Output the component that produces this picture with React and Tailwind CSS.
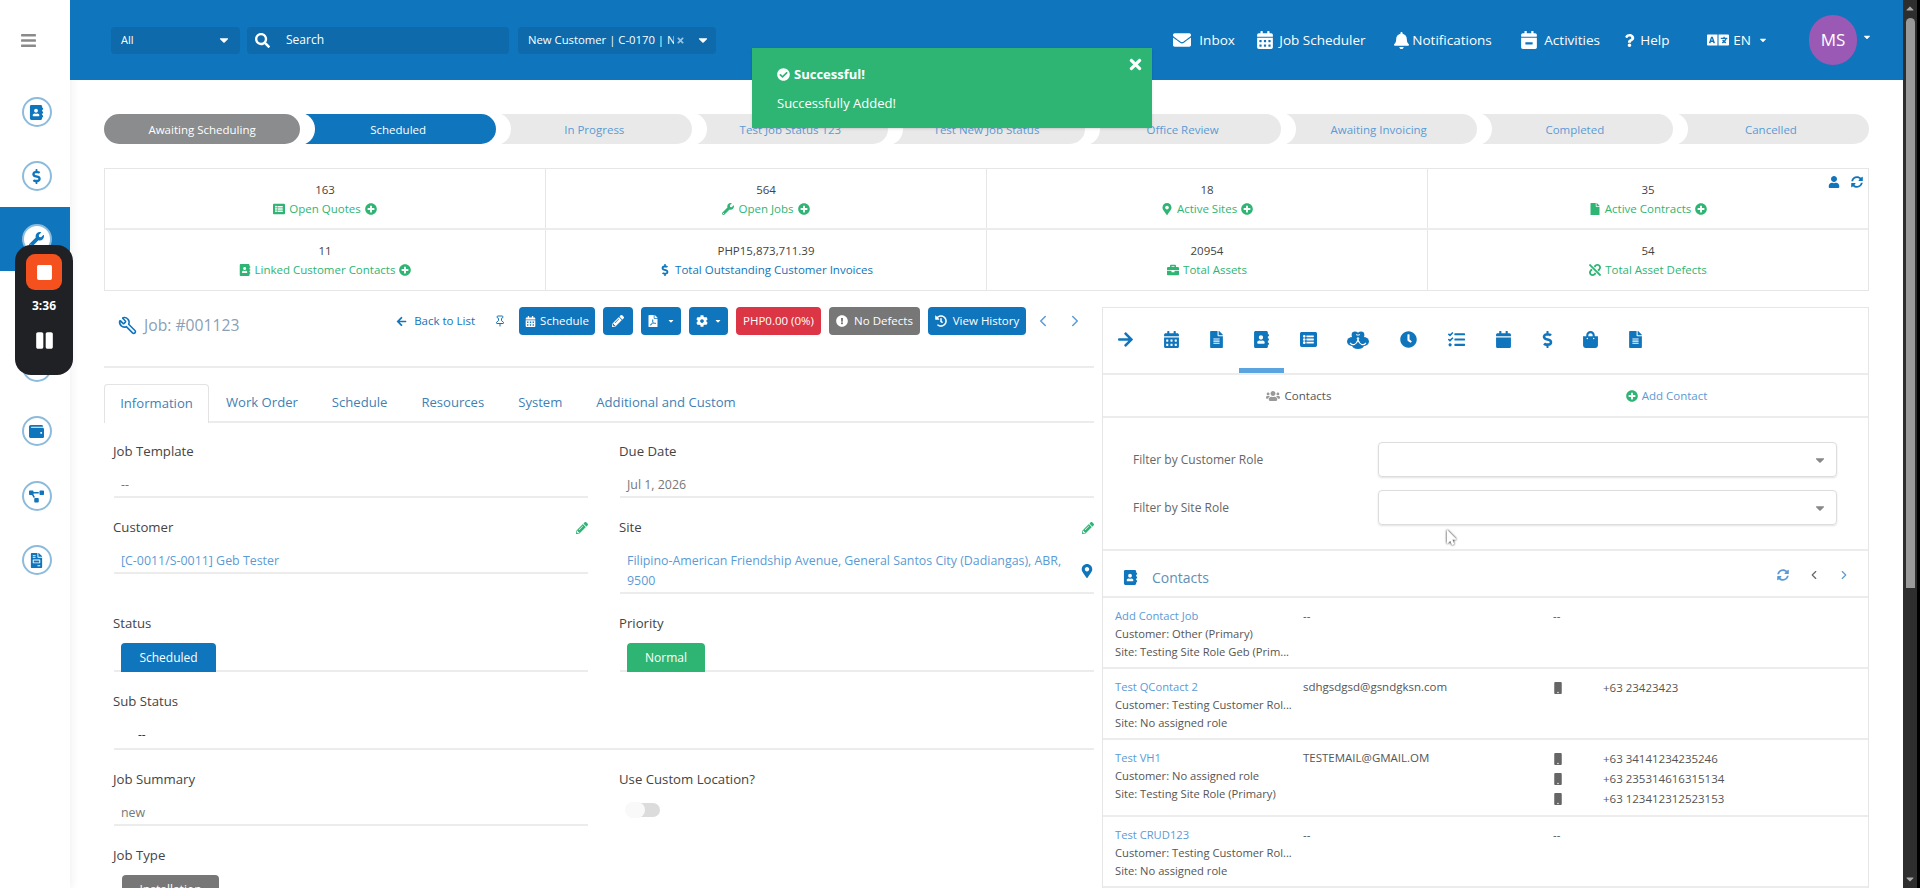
import {
  FaBars, FaAddressBook, FaDollarSign, FaWrench, FaWallet, FaProjectDiagram, FaFileInvoice,
  FaSearch, FaCaretDown, FaTimes, FaEnvelope, FaCalendarAlt, FaBell, FaCalendarMinus, FaQuestion,
  FaLanguage, FaCheckCircle, FaListAlt, FaPlusCircle, FaMapMarkerAlt, FaFileAlt, FaFile, FaBriefcase, FaUnlink,
  FaUser, FaSyncAlt, FaArrowLeft, FaArrowRight, FaPencilAlt, FaFilePdf, FaCog,
  FaExclamationCircle, FaHistory, FaClock, FaTasks,
  FaCalendar, FaShoppingBag, FaUsers, FaMobile, FaStop, FaPause, FaMousePointer,
} from 'react-icons/fa';
import { FiChevronLeft, FiChevronRight } from 'react-icons/fi';
import { Wrench, Pin } from 'lucide-react';

const font = { fontFamily: '"Open Sans", sans-serif' };

const Circle = ({ icon: Icon, className = 'bg-white' }) => (
  <div className={`ml-[3px] flex h-[30px] w-[30px] items-center justify-center rounded-full border-2 border-[#8dbbdc] ${className}`}>
    <Icon className="text-[15px] text-[#0f75bc]" />
  </div>
);

const Sidebar = () => (
  <aside className="flex w-[70px] shrink-0 flex-col items-center bg-white shadow-[2px_0_8px_rgba(0,0,0,0.06)]">
    <div className="flex h-20 w-full items-center pl-[20px]">
      <FaBars className="text-[17px] text-[#8a8a8a]" />
    </div>
    <div className="mt-[17px]"><Circle icon={FaAddressBook} /></div>
    <div className="mt-[34px]"><Circle icon={FaDollarSign} /></div>
    <div className="mt-[16px] flex h-[64px] w-full items-center justify-center bg-[#0f75bc]"><Circle icon={FaWrench} /></div>
    <div className="mt-[17px]"><Circle icon={FaFileAlt} /></div>
    <div className="mt-[34px]"><Circle icon={FaFileAlt} /></div>
    <div className="mt-[34px]"><Circle icon={FaWallet} /></div>
    <div className="mt-[35px]"><Circle icon={FaProjectDiagram} /></div>
    <div className="mt-[34px]"><Circle icon={FaFileInvoice} /></div>
  </aside>
);

const navItems = [
  { label: 'Inbox', icon: FaEnvelope, size: 'text-[18px]', box: 'w-[26px]', w: 'w-[83px]' },
  { label: 'Job Scheduler', icon: FaCalendarAlt, size: 'text-[18px]', box: 'w-[23px]', w: 'w-[137px]' },
  { label: 'Notifications', icon: FaBell, size: 'text-[17px]', box: 'w-[19px]', w: 'w-[127px]' },
  { label: 'Activities', icon: FaCalendarMinus, size: 'text-[18px]', box: 'w-[24px]', w: 'w-[103px]' },
  { label: 'Help', icon: FaQuestion, size: 'text-[13px]', box: 'w-[17px]', w: 'w-[84px]' },
];

const Header = () => (
  <header className="flex h-20 shrink-0 items-center bg-[#0f75bc] pl-[41px] text-white">
    <div className="flex h-[27px] w-[129px] items-center justify-between rounded-sm bg-[#0e6aab] pl-[10px] pr-[9px] text-[11px]">
      All <FaCaretDown className="text-[14px]" />
    </div>
    <div className="ml-[7px] flex h-[27px] w-[262px] items-center rounded-sm bg-[#0e6aab] pl-2 text-[12px]">
      <FaSearch className="mr-[16px] text-[15px]" /> Search
    </div>
    <div className="ml-[9px] flex h-[27px] w-[198px] items-center rounded-sm bg-[#0e6aab] pl-[10px] text-[11.3px]">
      <span className="w-[146px] overflow-hidden whitespace-nowrap">New Customer | C-0170 | Name</span>
      <FaTimes className="ml-[2px] text-[9px] text-[#9cc4e0]" />
      <FaCaretDown className="ml-[11px] text-[14px]" />
    </div>
    <nav className="ml-auto flex items-center text-[13.5px]">
      {navItems.map(({ label, icon: Icon, size, box, w }) => (
        <div key={label} className={`flex items-center ${w}`}>
          <div className={box}><Icon className={size} /></div>
          <span className="pt-[1px]">{label}</span>
        </div>
      ))}
      <FaLanguage className="text-[22px]" />
      <span className="ml-[4px]">EN</span>
      <FaCaretDown className="ml-[7px] text-[10px]" />
      <div className="ml-[41px] flex h-[50px] w-[48px] items-center justify-center rounded-full bg-[#9b59b6] text-[17px]">MS</div>
      <FaCaretDown className="mb-[6px] ml-[5px] mr-[31px] text-[10px]" />
    </nav>
  </header>
);

const steps = ['Awaiting Scheduling', 'Scheduled', 'In Progress', 'Test Job Status 123', 'Test New Job Status', 'Office Review', 'Awaiting Invoicing', 'Completed', 'Cancelled'];

const Stepper = () => (
  <div className="mt-[34px] flex h-[30px]">
    {steps.map((step, i) => {
      let tone = 'bg-[#e9e9e9] text-[#5b9bd5]';
      if (i === 0) tone = 'bg-[#8a8c8e] text-white rounded-l-full';
      if (i === 1) tone = 'bg-[#0f75bc] text-white';
      return (
        <div key={step} className={`relative flex flex-1 items-center justify-center overflow-hidden rounded-r-full text-[11.5px] ${tone}`}>
          {i > 0 && <span className="absolute -left-[15px] -top-[1px] h-[32px] w-[30px] rounded-[50%] bg-white" />}
          <span className="relative pt-[2px]">{step}</span>
        </div>
      );
    })}
  </div>
);

const Stat = ({ value, icon: Icon, label, plus, blue, extra }) => (
  <div className="relative flex flex-1 flex-col items-center justify-center border-r border-[#e6e6e6] pt-[1px] text-[11.5px] last:border-r-0">
    <div className="leading-[18px] text-[#444]">{value}</div>
    <div className={`mt-[1px] flex items-center leading-[18px] ${blue ? 'text-[#0f75bc]' : 'text-[#2eb574]'}`}>
      <Icon className="mr-[4px] text-[12px]" />
      {label}
      {plus && <FaPlusCircle className="ml-[4px] text-[12px]" />}
    </div>
    {extra}
  </div>
);

const StatsGrid = () => (
  <div className="mt-[24px] h-[123px] border border-[#e6e6e6]">
    <div className="flex h-[61px] border-b-2 border-[#ececec]">
      <Stat value="163" icon={FaListAlt} label="Open Quotes" plus />
      <Stat value="564" icon={FaWrench} label="Open Jobs" plus />
      <Stat value="18" icon={FaMapMarkerAlt} label="Active Sites" plus />
      <Stat
        value="35"
        icon={FaFile}
        label="Active Contracts"
        plus
        extra={
          <div className="absolute right-[5px] top-[7px] flex gap-[11px] text-[12px] text-[#0f75bc]">
            <FaUser />
            <FaSyncAlt />
          </div>
        }
      />
    </div>
    <div className="flex h-[60px]">
      <Stat value="11" icon={FaAddressBook} label="Linked Customer Contacts" plus />
      <Stat value="PHP15,873,711.39" icon={FaDollarSign} label="Total Outstanding Customer Invoices" blue />
      <Stat value="20954" icon={FaBriefcase} label="Total Assets" />
      <Stat value="54" icon={FaUnlink} label="Total Asset Defects" />
    </div>
  </div>
);

const Btn = ({ className = 'bg-[#0f75bc]', children, w }) => (
  <div className={`flex h-[28px] items-center justify-center rounded-[4px] text-[11.5px] text-white ${w} ${className}`}>{children}</div>
);

const JobToolbar = () => (
  <div className="flex h-[61px] items-start border-b-2 border-[#ececec]">
    <div className="ml-[14px] mt-[7px] flex items-center text-[#8aa0b5]">
      <Wrench size={19} strokeWidth={2} className="mr-[7px] -scale-x-100 text-[#0f75bc]" />
      <span className="text-[15.7px]">Job: #001123</span>
    </div>
    <div className="ml-auto flex items-center">
      <FaArrowLeft className="text-[11px] text-[#0f75bc]" />
      <span className="ml-[7px] text-[11.5px] text-[#0f75bc]">Back to List</span>
      <Pin size={12} className="ml-[19px] text-[#0f75bc]" />
      <div className="ml-[13px] flex items-center gap-[8px]">
        <Btn w="w-[76px] gap-[4px]"><FaCalendarAlt className="text-[11px]" />Schedule</Btn>
        <Btn w="w-[30px]"><FaPencilAlt className="text-[12px]" /></Btn>
        <Btn w="w-[40px] gap-[8px]"><FaFilePdf className="text-[12px]" /><FaCaretDown className="text-[8px]" /></Btn>
        <Btn w="w-[39px] gap-[6px]"><FaCog className="text-[12px]" /><FaCaretDown className="text-[8px]" /></Btn>
        <Btn w="w-[85px]" className="bg-[#dc3545]">PHP0.00 (0%)</Btn>
        <Btn w="w-[91px] gap-[6px]" className="bg-[#777]"><FaExclamationCircle className="text-[12px]" />No Defects</Btn>
        <Btn w="w-[98px] gap-[6px]"><FaHistory className="text-[12px]" />View History</Btn>
      </div>
      <FiChevronLeft className="ml-[8px] text-[18px] text-[#5b9bd5]" />
      <FiChevronRight className="ml-[14px] mr-[10px] text-[18px] text-[#5b9bd5]" />
    </div>
  </div>
);

const tabs = ['Information', 'Work Order', 'Schedule', 'Resources', 'System', 'Additional and Custom'];

const Tabs = () => (
  <div className="mt-[16px] flex h-[39px] items-stretch border-b-2 border-[#ececec] text-[13.1px] text-[#3f7fb5]">
    {tabs.map((t, i) => (
      <div
        key={t}
        className={i === 0
          ? '-mb-[2px] flex w-[105px] items-center justify-center rounded-t border border-b-0 border-[#e3e3e3] bg-white'
          : 'flex items-center px-[17px]'}
      >
        {t}
      </div>
    ))}
  </div>
);

const Field = ({ label, action, children, line = true, className = '' }) => (
  <div className={className}>
    <div className="flex h-5 items-center justify-between text-[13.2px] text-[#444]">
      {label}
      {action}
    </div>
    <div className={line ? 'ml-[1px] border-b-2 border-[#ececec]' : ''}>{children}</div>
  </div>
);

const Value = ({ className = 'text-[#777]', children, end }) => (
  <div className="flex items-center justify-between pb-[1px] pl-[7px] pt-[13px] text-[12.4px] leading-[20px]">
    <span className={className}>{children}</span>
    {end}
  </div>
);

const Edit = () => <FaPencilAlt className="text-[12px] text-[#2eb574]" />;

const Badge = ({ className, children }) => (
  <div className={`-mb-[2px] ml-[7px] mt-[9px] flex h-[29px] items-center justify-center rounded-t-[4px] text-[12px] text-white ${className}`}>{children}</div>
);

const InfoForm = () => (
  <div className="grid grid-cols-[475px_475px] gap-x-[31px] gap-y-[20px] pl-[9px] pt-[19px]">
    <Field label="Job Template"><Value>--</Value></Field>
    <Field label="Due Date"><Value>Jul 1, 2026</Value></Field>

    <Field label="Customer" action={<Edit />} className="self-start">
      <Value className="text-[#5b9bd5]">[C-0011/S-0011] Geb Tester</Value>
    </Field>
    <Field label="Site" action={<Edit />}>
      <Value className="w-[450px] text-[#5b9bd5]" end={<FaMapMarkerAlt className="text-[14px] text-[#0f75bc]" />}>
        Filipino-American Friendship Avenue, General Santos City (Dadiangas), ABR, 9500
      </Value>
    </Field>

    <Field label="Status"><Badge className="w-[95px] bg-[#0f75bc]">Scheduled</Badge></Field>
    <Field label="Priority"><Badge className="w-[78px] bg-[#2eb574]">Normal</Badge></Field>

    <Field label="Sub Status" className="col-span-2">
      <div className="pb-[3px] pl-[24px] pt-[13px] text-[12px] leading-[20px] text-[#333]">--</div>
    </Field>

    <Field label="Job Summary"><Value>new</Value></Field>
    <Field label="Use Custom Location?" line={false}>
      <div className="relative ml-[7px] mt-[13px] h-[14px] w-[34px] rounded-full bg-[#dcdcdc]">
        <span className="absolute -left-[1px] top-[-1px] h-[16px] w-[20px] rounded-full bg-[#f9f9f9]" />
      </div>
    </Field>

    <Field label="Job Type" line={false}>
      <div className="ml-[9px] mt-[9px] flex h-[29px] w-[97px] justify-center rounded-t-[4px] bg-[#777] pt-[6px] text-[12px] text-white">Installation</div>
    </Field>
  </div>
);

// no package icon matched this one, so it is drawn
const BowIcon = () => (
  <svg width="22" height="20" viewBox="0 0 22 20" className="text-[#0f75bc]" fill="currentColor">
    <circle cx="8" cy="5" r="3.4" />
    <circle cx="14" cy="5" r="3.4" />
    <ellipse cx="5.5" cy="11.5" rx="5.5" ry="4.5" />
    <ellipse cx="16.5" cy="11.5" rx="5.5" ry="4.5" />
    <ellipse cx="11" cy="15.5" rx="6" ry="3.5" />
    <path d="M3 13c3 3 6 2 8-3 2 5 5 6 8 3" fill="none" stroke="#fff" strokeWidth="1.2" />
    <path d="M9 4.5c1 .8 3 .8 4 0" fill="none" stroke="#fff" strokeWidth="1" />
  </svg>
);

const RightIcon = ({ icon: Icon }) => <Icon className="text-[17px] text-[#0f75bc]" />;

const rightTabs = [
  [<RightIcon icon={FaArrowRight} />, 'w-[45px]'], [<RightIcon icon={FaCalendarAlt} />, 'w-[46px]'],
  [<RightIcon icon={FaFileAlt} />, 'w-[45px]'], [<RightIcon icon={FaAddressBook} />, 'w-[45px]'],
  [<RightIcon icon={FaListAlt} />, 'w-[49px]'], [<BowIcon />, 'w-[50px]'],
  [<RightIcon icon={FaClock} />, 'w-[50px]'], [<RightIcon icon={FaTasks} />, 'w-[46px]'],
  [<RightIcon icon={FaCalendar} />, 'w-[48px]'], [<RightIcon icon={FaDollarSign} />, 'w-[40px]'],
  [<RightIcon icon={FaShoppingBag} />, 'w-[46px]'], [<RightIcon icon={FaFileAlt} />, 'w-[44px]'],
];

const Select = () => (
  <div className="flex h-[35px] w-[459px] items-center justify-end rounded border border-[#ddd] pr-[9px] shadow-[0_1px_2px_rgba(0,0,0,0.12)]">
    <FaCaretDown className="text-[14px] text-[#888]" />
  </div>
);

const contacts = [
  { name: 'Add Contact Job', customer: 'Customer: Other (Primary)', site: 'Site: Testing Site Role Geb (Prim...', email: '--', phones: [] },
  { name: 'Test QContact 2', customer: 'Customer: Testing Customer Rol...', site: 'Site: No assigned role', email: 'sdhgsdgsd@gsndgksn.com', phones: ['+63 23423423'] },
  { name: 'Test VH1', customer: 'Customer: No assigned role', site: 'Site: Testing Site Role (Primary)', email: 'TESTEMAIL@GMAIL.OM', phones: ['+63 34141234235246', '+63 235314616315134', '+63 123412312523153'] },
  { name: 'Test CRUD123', customer: 'Customer: Testing Customer Rol...', site: 'Site: No assigned role', email: '--', phones: [] },
];

const ContactRow = ({ contact }) => (
  <div className="flex border-b-2 border-[#ececec] pb-[6px] pt-[9px] text-[11.5px] leading-[18px] text-[#555]">
    <div className="ml-[12px] w-[188px] whitespace-nowrap text-[11.2px]">
      <div className="text-[#5b9bd5]">{contact.name}</div>
      <div>{contact.customer}</div>
      <div>{contact.site}</div>
    </div>
    <div className="w-[250px]">{contact.email}</div>
    {contact.phones.length === 0 && <div>--</div>}
    <div>
      {contact.phones.map((p) => (
        <div key={p} className="flex h-5 items-center">
          <FaMobile className="-ml-[1px] text-[12px] text-[#666]" />
          <span className="ml-[39px]">{p}</span>
        </div>
      ))}
    </div>
  </div>
);

const ContactsPanel = () => (
  <section className="ml-[8px] w-[767px] shrink-0 border-x border-t border-[#e6e6e6]">
    <div className="flex h-[67px] border-b-2 border-[#ececec]">
      {rightTabs.map(([icon, w], i) => (
        <div key={i} className={`relative flex items-center justify-center pb-[2px] ${w}`}>
          {icon}
          {i === 3 && <span className="absolute bottom-0 left-0 h-[5px] w-full bg-[#5aa5e0]" />}
        </div>
      ))}
    </div>
    <div className="flex h-[43px] border-b-2 border-[#ececec] text-[11.5px]">
      <div className="flex w-[391px] items-center justify-center text-[#555]"><FaUsers className="mr-[5px] text-[14px] text-[#999]" />Contacts</div>
      <div className="flex w-[345px] items-center justify-center text-[#5b9bd5]"><FaPlusCircle className="mr-[4px] text-[12px] text-[#2eb574]" />Add Contact</div>
    </div>
    <div className="flex flex-col gap-[13px] border-b-2 border-[#ececec] py-[24px] pl-[30px] text-[12px] text-[#666]">
      <div className="flex items-center"><span className="w-[245px]">Filter by Customer Role</span><Select /></div>
      <div className="flex items-center"><span className="w-[245px]">Filter by Site Role</span><Select /></div>
    </div>
    <div className="flex h-[47px] items-center border-b-2 border-[#ececec] pl-[20px] pr-[17px] pt-[8px]">
      <FaAddressBook className="text-[15px] text-[#0f75bc]" />
      <span className="ml-[14px] text-[14px] text-[#5f8fb5]">Contacts</span>
      <FaSyncAlt className="ml-auto -mt-[6px] text-[12px] text-[#5b9bd5]" />
      <FiChevronLeft className="ml-[18px] -mt-[6px] text-[14px] text-[#666]" />
      <FiChevronRight className="ml-[16px] -mt-[6px] text-[14px] text-[#5b9bd5]" />
    </div>
    {contacts.map((c) => <ContactRow key={c.name} contact={c} />)}
  </section>
);

const Toast = () => (
  <div className="absolute left-[752px] top-[48px] z-20 h-[80px] w-[400px] bg-[#2eb574] pl-[25px] pt-[17px] text-white shadow-sm">
    <div className="flex items-center text-[13px] font-bold">
      <FaCheckCircle className="mr-[4px] text-[13px]" /> Successful!
    </div>
    <div className="mt-[9px] text-[13px]">Successfully Added!</div>
    <FaTimes className="absolute right-[8px] top-[8px] text-[17px]" />
  </div>
);

const Recorder = () => (
  <div className="absolute left-[15px] top-[245px] z-30 flex h-[130px] w-[58px] flex-col items-center rounded-[16px] bg-[#202124] pt-[9px] text-white">
    <div className="flex h-[36px] w-[36px] items-center justify-center rounded-[9px] bg-[#f4511e]">
      <FaStop className="text-[17px]" />
    </div>
    <div className="mt-[7px] text-[12px] font-bold">3:36</div>
    <FaPause className="mt-[16px] text-[19px]" />
  </div>
);

const Scrollbar = () => (
  <div className="flex w-[17px] shrink-0 flex-col items-center border-r-[3px] border-black bg-[#2e2e2e] py-[3px]">
    <FaCaretDown className="rotate-180 text-[12px] text-[#aaa]" />
    <div className="mt-[3px] h-[570px] w-[9px] rounded-t-full rounded-b-md bg-[#9a9a9a]" />
    <FaCaretDown className="mt-auto text-[12px] text-[#aaa]" />
  </div>
);

export default function App() {
  return (
    <div className="relative flex h-screen overflow-hidden bg-white" style={font}>
      <Sidebar />
      <main className="flex min-w-0 flex-1 flex-col">
        <Header />
        <div className="px-[34px]">
          <Stepper />
          <StatsGrid />
          <div className="mt-[16px] flex">
            <div className="w-[990px] shrink-0">
              <JobToolbar />
              <Tabs />
              <InfoForm />
            </div>
            <ContactsPanel />
          </div>
        </div>
      </main>
      <Scrollbar />
      <Toast />
      <Recorder />
      <FaMousePointer className="absolute left-[1444px] top-[530px] text-[15px] text-white [filter:drop-shadow(0_0_1px_#000)]" />
    </div>
  );
}
